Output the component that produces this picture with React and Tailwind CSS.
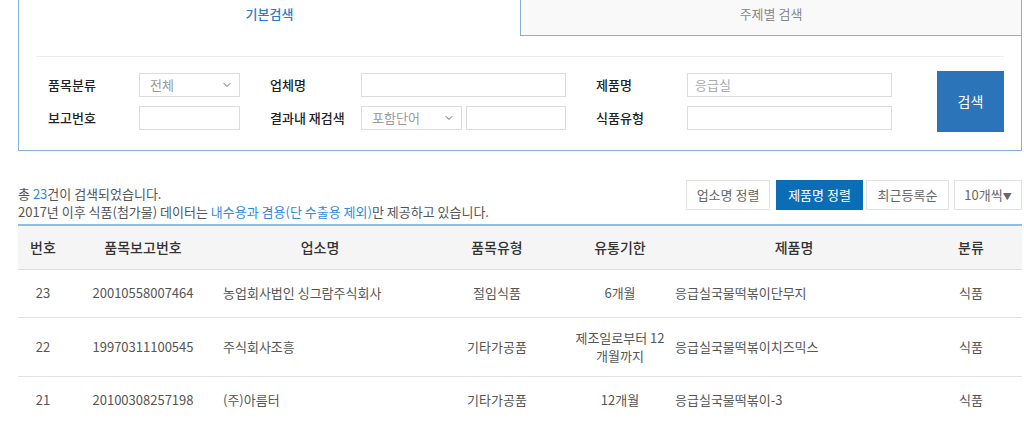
import { ChevronDown } from "lucide-react";

const font = { fontFamily: '"Noto Sans CJK KR", "Noto Sans", sans-serif' };

const rows = [
  { no: "23", rep: "20010558007464", biz: "농업회사법인 싱그람주식회사", type: "절임식품", life: "6개월", prod: "응급실국물떡볶이단무지", cat: "식품" },
  { no: "22", rep: "19970311100545", biz: "주식회사조흥", type: "기타가공품", life: "제조일로부터 12 개월까지", prod: "응급실국물떡볶이치즈믹스", cat: "식품" },
  { no: "21", rep: "20100308257198", biz: "(주)아름터", type: "기타가공품", life: "12개월", prod: "응급실국물떡볶이-3", cat: "식품" },
];

function Select({ value, width }) {
  return (
    <div className={`flex h-[24px] ${width} items-center justify-between border border-[#dcdcdc] bg-white pl-[10px] pr-[6px] text-[13px] text-[#999]`}>
      <span>{value}</span>
      <ChevronDown size={12} strokeWidth={2} className="text-[#666]" />
    </div>
  );
}

function Input({ width, placeholder }) {
  return (
    <div className={`flex h-[24px] ${width} items-center border border-[#dcdcdc] bg-white px-[7px] text-[13px] text-[#aaa]`}>
      {placeholder}
    </div>
  );
}

export default function App() {
  return (
    <div className="min-h-screen bg-white text-[13px]" style={font}>
      <div className="ml-[18px] w-[1004px]">
        {/* Search panel */}
        <div className="flex h-[36px]">
          <div className="w-[502px] border-l border-[#7fb2dd] pt-[4px] text-center text-[13px] font-medium text-[#2b7cc2]">
            기본검색
          </div>
          <div className="w-[502px] border-x border-b border-[#7fb2dd] bg-[#f9f9f9] pt-[4px] text-center text-[13px] text-[#888]">
            주제별 검색
          </div>
        </div>
        <div className="border-x border-b border-[#7fb2dd] px-[17px] pt-[20px] pb-[18px]">
          <div className="border-t border-[#ececec]" />
          <div className="mt-[14px] flex items-center">
            <div className="flex flex-col gap-[9px] pl-[12px]">
              <div className="flex items-center">
                <span className="w-[91px] font-medium text-[#222]">품목분류</span>
                <Select value="전체" width="w-[101px]" />
                <span className="ml-[30px] w-[91px] font-medium text-[#222]">업체명</span>
                <Input width="w-[205px]" />
                <span className="ml-[30px] w-[91px] font-medium text-[#222]">제품명</span>
                <Input width="w-[205px]" placeholder="응급실" />
              </div>
              <div className="flex items-center">
                <span className="w-[91px] font-medium text-[#222]">보고번호</span>
                <Input width="w-[101px]" />
                <span className="ml-[30px] w-[91px] font-medium text-[#222]">결과내 재검색</span>
                <Select value="포함단어" width="w-[101px]" />
                <div className="ml-[4px]">
                  <Input width="w-[100px]" />
                </div>
                <span className="ml-[30px] w-[91px] font-medium text-[#222]">식품유형</span>
                <Input width="w-[205px]" />
              </div>
            </div>
            <button className="ml-auto flex h-[61px] w-[67px] items-center justify-center bg-[#2b74ba] text-[14px] text-white">
              검색
            </button>
          </div>
        </div>

        {/* Result info */}
        <div className="mt-[29px] flex items-start justify-between">
          <div className="pt-[5px] leading-[18px] text-[#555]">
            <p>
              총 <span className="text-[#2b8be0]">23</span>건이 검색되었습니다.
            </p>
            <p>
              2017년 이후 식품(첨가물) 데이터는{" "}
              <span className="text-[#2b8be0]">내수용과 겸용(단 수출용 제외)</span>만 제공하고 있습니다.
            </p>
          </div>
          <div className="flex gap-[4px]">
            <button className="h-[30px] w-[84px] border border-[#e2e2e2] bg-white text-[#666]">업소명 정렬</button>
            <button className="ml-[2px] h-[30px] w-[87px] bg-[#0a6db6] text-white">제품명 정렬</button>
            <button className="-ml-[1px] h-[30px] w-[83px] border border-[#e2e2e2] bg-white text-[#666]">최근등록순</button>
            <button className="ml-[1px] h-[30px] w-[68px] border border-[#e2e2e2] bg-white text-[#666]">
              10개씩<span className="text-[9px]">▼</span>
            </button>
          </div>
        </div>

        {/* Table */}
        <table className="mt-[3px] w-full table-fixed border-collapse border-t-2 border-[#8dbde3] text-[13px]">
          <colgroup>
            <col className="w-[50px]" />
            <col className="w-[150px]" />
            <col className="w-[204px]" />
            <col className="w-[150px]" />
            <col className="w-[96px]" />
            <col className="w-[252px]" />
            <col className="w-[102px]" />
          </colgroup>
          <thead>
            <tr className="h-[44px] border-b border-[#dddddd] bg-[#f5f5f5] text-[14px] text-[#333]">
              <th className="font-medium">번호</th>
              <th className="font-medium">품목보고번호</th>
              <th className="font-medium">업소명</th>
              <th className="font-medium">품목유형</th>
              <th className="font-medium">유통기한</th>
              <th className="font-medium">제품명</th>
              <th className="font-medium">분류</th>
            </tr>
          </thead>
          <tbody className="text-[#555]">
            {rows.map((r) => (
              <tr key={r.no} className="h-[48px] border-b border-[#e3e3e3] leading-[18px]">
                <td className="py-[11px] text-center">{r.no}</td>
                <td className="py-[11px] text-center">{r.rep}</td>
                <td className="py-[11px] pl-[5px]">{r.biz}</td>
                <td className="py-[11px] text-center">{r.type}</td>
                <td className="py-[11px] text-center">{r.life}</td>
                <td className="py-[11px] pl-[7px]">{r.prod}</td>
                <td className="py-[11px] text-center">{r.cat}</td>
              </tr>
            ))}
          </tbody>
        </table>
      </div>
    </div>
  );
}
